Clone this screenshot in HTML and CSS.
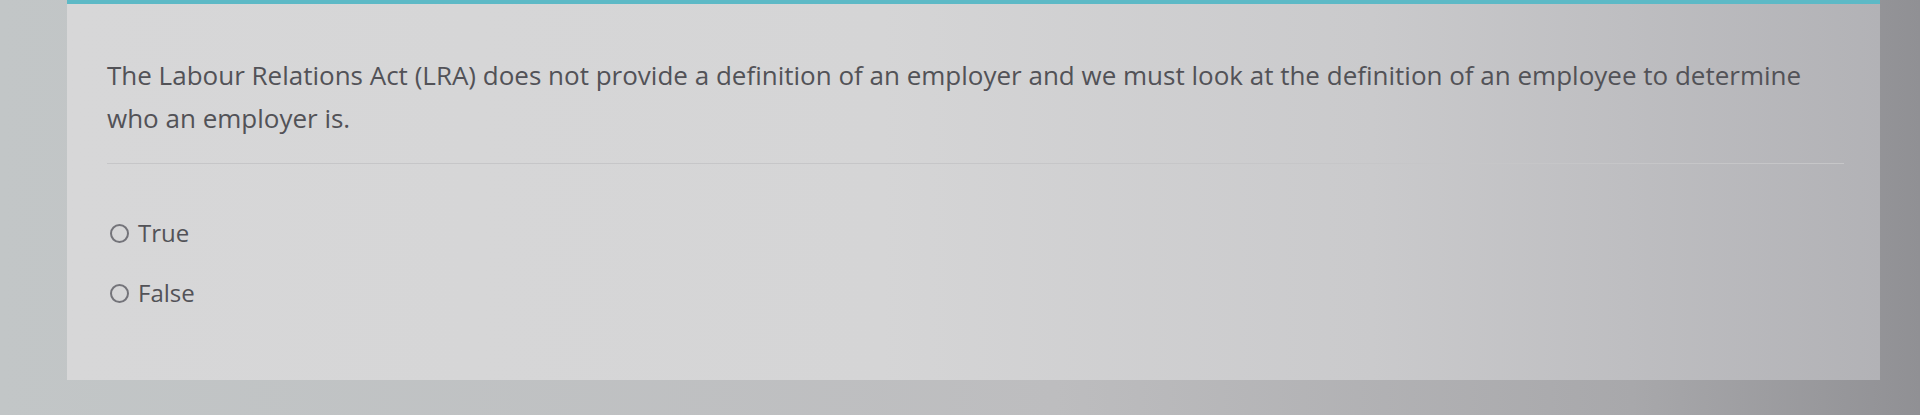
FILE: index.html
```html
<!DOCTYPE html>
<html lang="en">
<head>
  <meta charset="UTF-8" />
  <meta name="viewport" content="width=device-width, initial-scale=1.0" />
  <title>Question</title>
  <link rel="stylesheet" href="styles.css">
</head>
<body>
  <main class="page">
    <section class="question-card">
      <p class="question-text">The Labour Relations Act (LRA) does not provide a definition of an employer and we must look at the definition of an employee to determine who an employer is.</p>
      <hr class="divider" />
      <ul class="answers">
        <li><label class="answer"><span class="radio"></span>True</label></li>
        <li><label class="answer"><span class="radio"></span>False</label></li>
      </ul>
    </section>
  </main>
</body>
</html>
```

FILE: styles.css
```css
/* Variables & Reset */
:root {
  --accent: #5db9c6;
  --text: #525257;
  --line: #c6c6c8;
  --transition: 0.3s ease;
}
* { margin: 0; padding: 0; box-sizing: border-box; }
html, body { height: 100%; }
body {
  font-family: 'Open Sans', 'Noto Sans', sans-serif;
  color: var(--text);
  background: linear-gradient(90deg, #c2c6c7 0%, #bdbdbf 55%, #a8a8ab 85%, #909094 100%);
  overflow: hidden;
}

.page { padding-left: 67px; padding-right: 40px; height: 100%; }

/* Question card */
.question-card {
  height: 380px;
  border-top: 4px solid var(--accent);
  background: linear-gradient(90deg, #d7d7d8 0%, #d5d5d6 45%, #cacacc 72%, #b2b2b6 100%);
  padding: 50px 36px 0 40px;
}
.question-text { font-size: 26px; line-height: 43px; max-width: 1728px; }

.divider { border: 0; border-top: 1px solid var(--line); margin: 23px 0 0; }

/* Answers */
.answers { list-style: none; padding-top: 54px; display: flex; flex-direction: column; gap: 30px; }
.answer { display: flex; align-items: center; gap: 9px; font-size: 24px; line-height: 30px; cursor: pointer; }
.radio { width: 19px; height: 19px; border: 2px solid #74747a; border-radius: 50%; margin-left: 3px; }
```
